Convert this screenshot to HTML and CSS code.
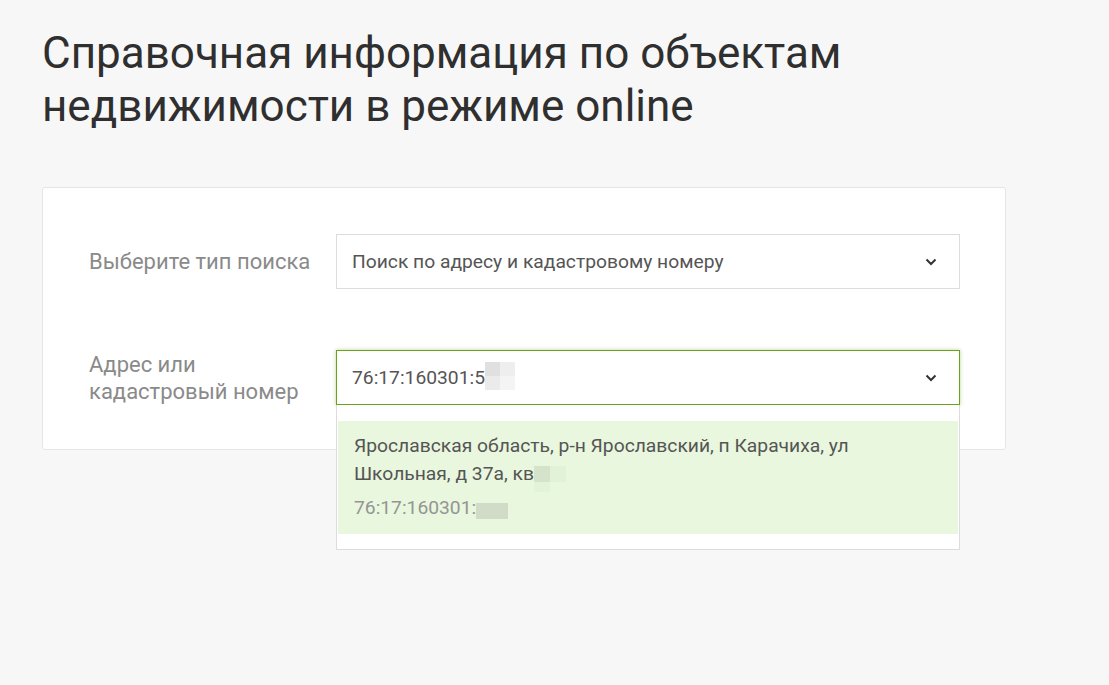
FILE: index.html
```html
<!DOCTYPE html>
<html lang="ru">
<head>
<meta charset="utf-8">
<title>Справочная информация</title>
<link rel="stylesheet" href="styles.css">
</head>
<body>
<div class="page">
  <h1 class="title">Справочная информация по объектам<br>недвижимости в режиме online</h1>
  <div class="card">
    <div class="row">
      <div class="label">Выберите тип поиска</div>
      <div class="field">
        <div class="select">
          <span class="select-text">Поиск по адресу и кадастровому номеру</span>
          <svg class="chev" width="12" height="8" viewBox="0 0 12 8"><polyline points="1.5,1.5 6,6 10.5,1.5" fill="none" stroke="#333" stroke-width="2"/></svg>
        </div>
      </div>
    </div>
    <div class="row row2">
      <div class="label">Адрес или<br>кадастровый номер</div>
      <div class="field">
        <div class="select active">
          <span class="select-text">76:17:160301:5<span class="pix pix-a"><i class="c1"></i><i class="c2"></i><i class="c3"></i><i class="c4"></i></span></span>
          <svg class="chev" width="12" height="8" viewBox="0 0 12 8"><polyline points="1.5,1.5 6,6 10.5,1.5" fill="none" stroke="#333" stroke-width="2"/></svg>
        </div>
        <div class="dropdown">
          <div class="item">
            <div class="addr">Ярославская область, р-н Ярославский, п Карачиха, ул<br>Школьная, д 37а, кв<span class="pix pix-b"><i class="d1"></i><i class="d2"></i><i class="d3"></i><i class="d4"></i></span></div>
            <div class="code">76:17:160301:<span class="pix-c"></span></div>
          </div>
        </div>
      </div>
    </div>
  </div>
</div>
</body>
</html>
```

FILE: styles.css
```css
html, body {
  margin: 0;
  padding: 0;
  background: #f7f7f7;
  font-family: Roboto, "Noto Sans", Arial, sans-serif;
}
.page {
  padding: 27px 0 0 42px;
  width: 964px;
  min-height: 685px;
  box-sizing: content-box;
}
.title {
  margin: 0 0 54px 0;
  font-size: 44px;
  line-height: 53px;
  font-weight: 400;
  color: #2f2f2f;
}
.card {
  background: #fff;
  border: 1px solid #e6e6e6;
  border-radius: 3px;
  padding: 46px 45px 44px 46px;
}
.row {
  display: flex;
  align-items: center;
}
.row2 {
  margin-top: 61px;
}
.label {
  width: 247px;
  flex: none;
  font-size: 22px;
  line-height: 27px;
  color: #8a8a8a;
}
.field {
  flex: 1;
  position: relative;
}
.select {
  height: 55px;
  box-sizing: border-box;
  border: 1px solid #dcdcdc;
  background: #fff;
  display: flex;
  align-items: center;
  justify-content: space-between;
  padding: 0 22px 0 15px;
}
.select.active {
  border-color: #6aa21c;
  box-shadow: 0 0 4px rgba(106, 162, 28, 0.45);
}
.select-text {
  font-size: 19.25px;
  color: #555;
  display: flex;
  align-items: center;
}
.chev {
  display: block;
}
.pix {
  display: inline-grid;
  grid-template-columns: 15px 15px;
  grid-template-rows: 14px 14px;
}
.pix i { display: block; }
.pix-a {
  margin-top: -3px;
}
.pix-a .c1 { background: #e0e0e0; }
.pix-a .c2 { background: #eeeeee; }
.pix-a .c3 { background: #ebebeb; }
.pix-a .c4 { background: #f4f4f4; }
.dropdown {
  position: absolute;
  left: 0;
  right: 0;
  top: 55px;
  background: #fff;
  border: 1px solid #dcdcdc;
  border-top: none;
  padding: 16px 1px 15px 1px;
  z-index: 5;
}
.item {
  background: #e8f7dd;
  padding: 11px 16px 12px 16px;
  font-size: 19.25px;
}
.addr {
  line-height: 28px;
  color: #555;
}
.pix-b {
  grid-template-columns: 16px 16px;
  grid-template-rows: 16px 10px;
  vertical-align: top;
  margin-top: 6px;
  margin-bottom: -20px;
}
.pix-b .d1 { background: #d5e3cb; }
.pix-b .d2 { background: #e2f2d8; }
.pix-b .d3 { background: #e3f3d9; }
.pix-b .d4 { background: transparent; }
.code {
  margin-top: 6px;
  line-height: 28px;
  color: #959595;
}
.pix-c {
  display: inline-block;
  width: 32px;
  height: 16px;
  background: #d0dcc7;
  vertical-align: top;
  margin-top: 9px;
}
```
